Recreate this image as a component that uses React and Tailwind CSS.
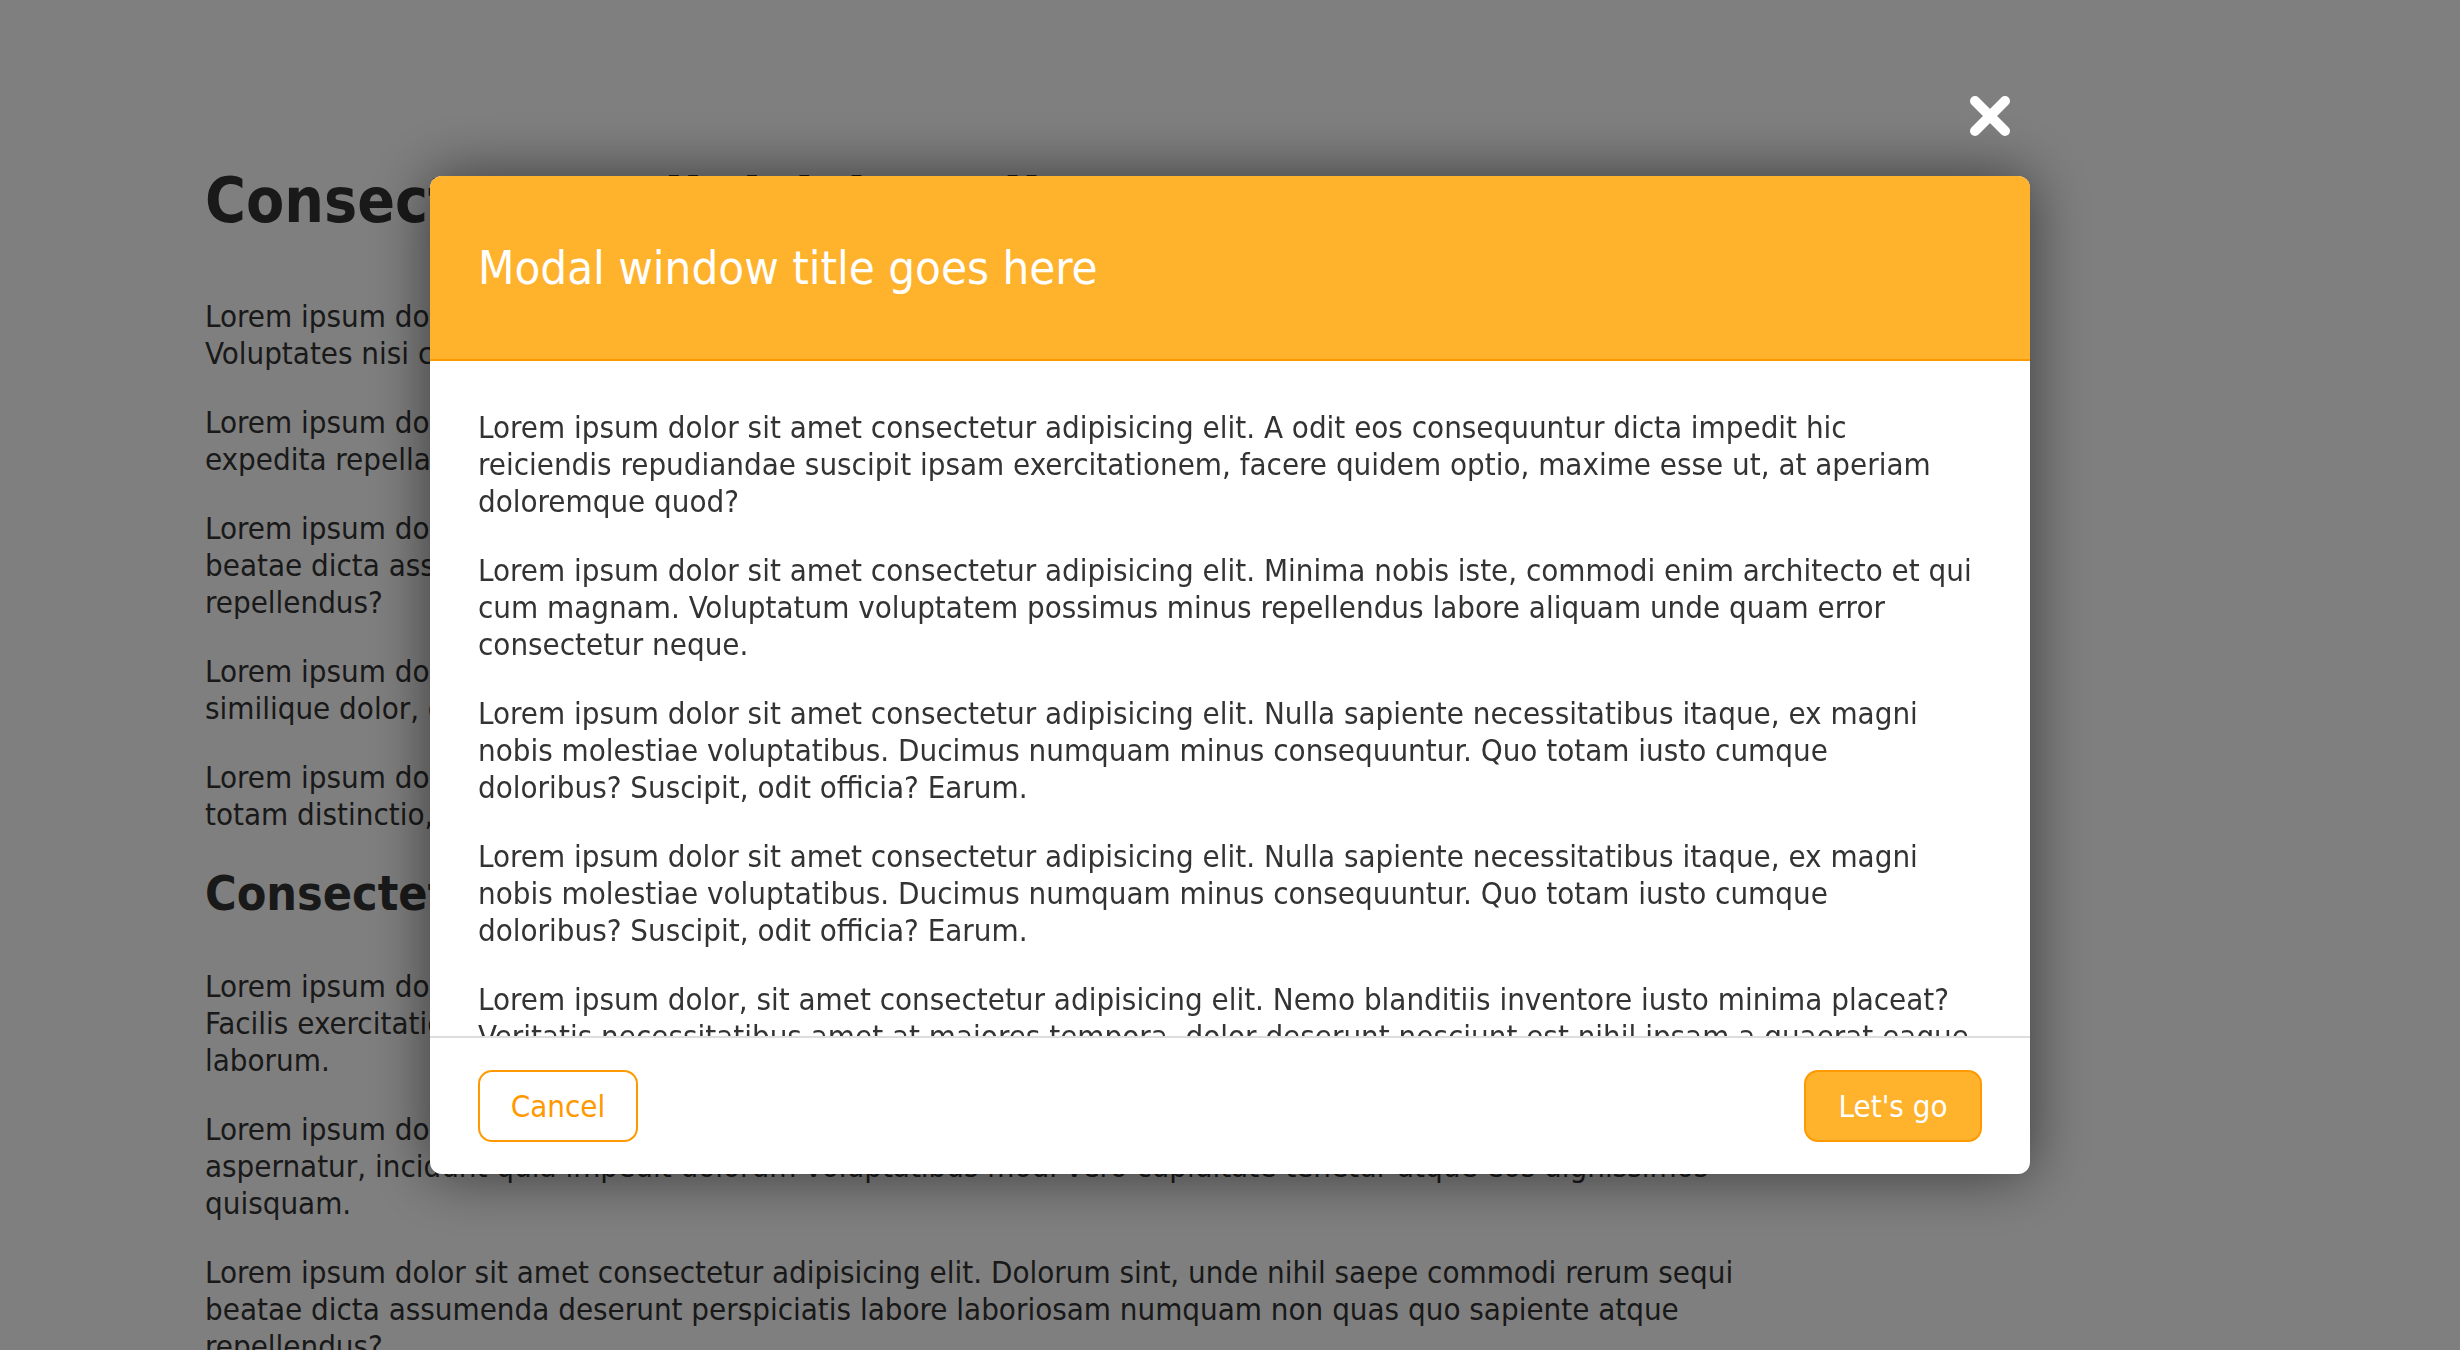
const bgParagraphs = [
	[
		"Lorem ipsum dolor sit amet consectetur adipisicing elit. Quaerat ipsum officia, in dolorum saepe eum",
		"Voluptates nisi cupiditate aspernatur tenetur nostrum, dolores quam.",
	],
	[
		"Lorem ipsum dolor sit amet consectetur adipisicing elit. Nam, natus quae ducimus at alias quod",
		"expedita repellat ab porro inventore unde dolore.",
	],
	[
		"Lorem ipsum dolor sit amet consectetur adipisicing elit. Dolorum sint, unde nihil saepe commodi rerum sequi",
		"beatae dicta assumenda deserunt perspiciatis labore laboriosam numquam non quas quo sapiente atque",
		"repellendus?",
	],
	[
		"Lorem ipsum dolor sit amet consectetur adipisicing elit. Eveniet rem aliquid ipsa atque voluptas",
		"similique dolor, commodi quos.",
	],
	[
		"Lorem ipsum dolor sit amet consectetur adipisicing elit. Sunt ab error odit nostrum dolore quia",
		"totam distinctio, eius velit nemo.",
	],
];

const bgParagraphs2 = [
	[
		"Lorem ipsum dolor sit amet consectetur adipisicing elit. Quos magni dolores sed, amet libero nulla",
		"Facilis exercitationem earum ipsa reiciendis eaque quis, molestiae, illum quae",
		"laborum.",
	],
	[
		"Lorem ipsum dolor sit amet consectetur adipisicing elit. Doloremque nam porro eum blanditiis",
		"aspernatur, incidunt quia impedit dolorum voluptatibus modi vero cupiditate tenetur atque eos dignissimos",
		"quisquam.",
	],
	[
		"Lorem ipsum dolor sit amet consectetur adipisicing elit. Dolorum sint, unde nihil saepe commodi rerum sequi",
		"beatae dicta assumenda deserunt perspiciatis labore laboriosam numquam non quas quo sapiente atque",
		"repellendus?",
	],
];

const modalParagraphs = [
	[
		"Lorem ipsum dolor sit amet consectetur adipisicing elit. A odit eos consequuntur dicta impedit hic",
		"reiciendis repudiandae suscipit ipsam exercitationem, facere quidem optio, maxime esse ut, at aperiam",
		"doloremque quod?",
	],
	[
		"Lorem ipsum dolor sit amet consectetur adipisicing elit. Minima nobis iste, commodi enim architecto et qui",
		"cum magnam. Voluptatum voluptatem possimus minus repellendus labore aliquam unde quam error",
		"consectetur neque.",
	],
	[
		"Lorem ipsum dolor sit amet consectetur adipisicing elit. Nulla sapiente necessitatibus itaque, ex magni",
		"nobis molestiae voluptatibus. Ducimus numquam minus consequuntur. Quo totam iusto cumque",
		"doloribus? Suscipit, odit officia? Earum.",
	],
	[
		"Lorem ipsum dolor sit amet consectetur adipisicing elit. Nulla sapiente necessitatibus itaque, ex magni",
		"nobis molestiae voluptatibus. Ducimus numquam minus consequuntur. Quo totam iusto cumque",
		"doloribus? Suscipit, odit officia? Earum.",
	],
	[
		"Lorem ipsum dolor, sit amet consectetur adipisicing elit. Nemo blanditiis inventore iusto minima placeat?",
		"Veritatis necessitatibus amet at maiores tempora, dolor deserunt nesciunt est nihil ipsam a quaerat eaque",
		"dolorem tenetur, ipsum illo aut voluptas quibusdam.",
	],
];

function Lines({ lines, className }) {
	return (
		<p className={className}>
			{lines.map((line, i) => (
				<span key={i} className="block whitespace-nowrap">
					{line}
				</span>
			))}
		</p>
	);
}

function CloseIcon() {
	return (
		<svg width="40" height="40" viewBox="0 0 40 40" fill="none">
			<path d="M5 5L35 35M35 5L5 35" stroke="white" strokeWidth="10" strokeLinecap="round" />
		</svg>
	);
}

export default function App() {
	return (
		<div className="relative h-[1350px] overflow-hidden bg-white font-['DejaVu_Sans_Condensed','DejaVu_Sans',sans-serif] text-[31px] leading-[37px] text-[#333]">
			{/* page behind the modal */}
			<div className="pl-[205px] pt-[164px]">
				<h1 className="text-[62px] font-bold leading-[74px] mb-[60px]">Consectetur adipisicing elit</h1>
				<div className="flex flex-col gap-[32px]">
					{bgParagraphs.map((p, i) => (
						<Lines key={i} lines={p} />
					))}
				</div>
				<h2 className="text-[48px] font-bold leading-[58px] mt-[31px] mb-[46px]">Consectetur adipisicing</h2>
				<div className="flex flex-col gap-[32px]">
					{bgParagraphs2.map((p, i) => (
						<Lines key={i} lines={p} />
					))}
				</div>
			</div>

			{/* overlay */}
			<div className="fixed inset-0 bg-black/50 flex items-center justify-center">
				<div className="relative w-[1600px] h-[998px] flex flex-col bg-white rounded-[12px] shadow-[0_0_60px_rgba(0,0,0,0.55)]">
					<button className="absolute -top-[80px] right-[20px] w-[40px] h-[40px]">
						<CloseIcon />
					</button>

					<div className="h-[185px] flex items-center px-12 bg-[#ffb22c] border-b-2 border-[#ff9900] rounded-t-[12px]">
						<h3 className="text-[47px] leading-[56px] text-white">Modal window title goes here</h3>
					</div>

					<div className="flex-1 overflow-hidden px-12 pt-12">
						<div className="flex flex-col gap-[32px]">
							{modalParagraphs.map((p, i) => (
								<Lines key={i} lines={p} />
							))}
						</div>
					</div>

					<div className="flex items-center justify-between px-12 py-8 border-t-2 border-[#dddddd]">
						<button className="w-[160px] h-[72px] flex items-center justify-center rounded-[14px] border-2 border-[#ff9900] bg-white text-[#ff9900]">
							Cancel
						</button>
						<button className="w-[178px] h-[72px] flex items-center justify-center rounded-[14px] border-2 border-[#ff9900] bg-[#ffb22c] text-white">
							Let's go
						</button>
					</div>
				</div>
			</div>
		</div>
	);
}
